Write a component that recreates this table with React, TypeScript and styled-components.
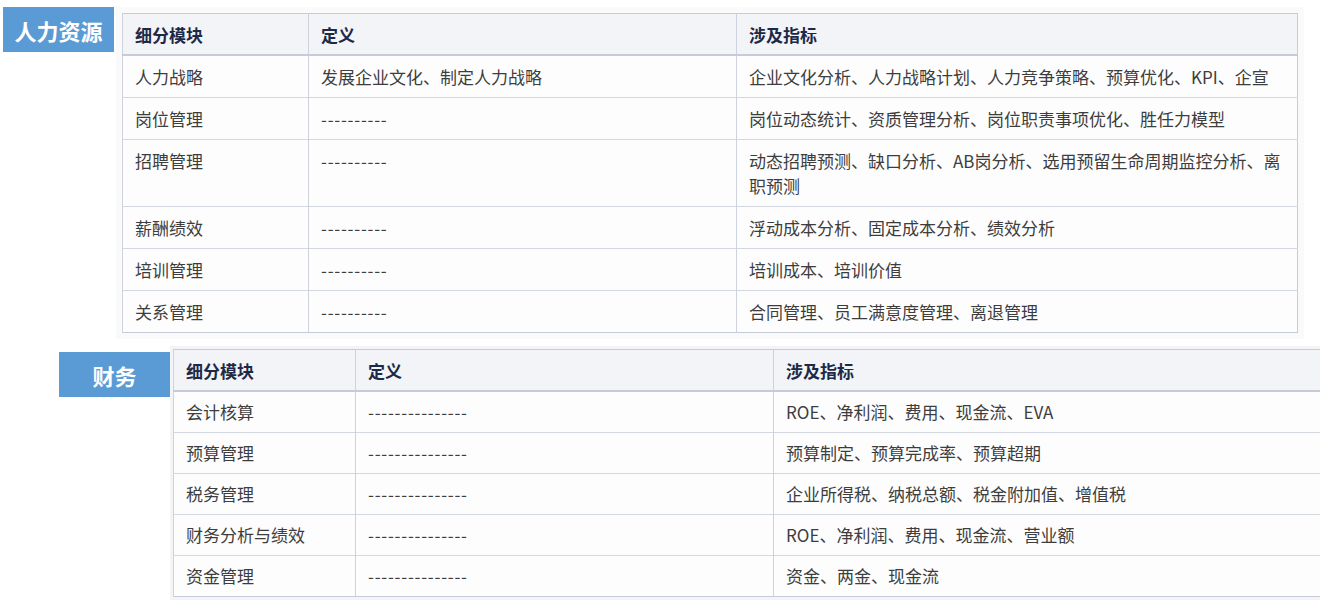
import React from "react";
import styled, { createGlobalStyle } from "styled-components";

const GlobalStyle = createGlobalStyle`
  html, body {
    margin: 0;
    padding: 0;
    background: #ffffff;
    overflow: hidden;
  }
  body {
    font-family: "Noto Sans CJK SC", "Noto Sans", sans-serif;
  }
`;

const Page = styled.div`
  width: 1320px;
  height: 606px;
  display: flex;
  flex-direction: column;
  gap: 7px;
  padding-top: 7px;
  box-sizing: border-box;
`;

const Section = styled.div<{ $indent: number; $labelTop: number }>`
  display: flex;
  align-items: flex-start;
  padding-left: ${(p) => p.$indent}px;
  gap: ${(p) => (p.$labelTop > 0 ? 0 : 2)}px;
  & > :first-child {
    margin-top: ${(p) => p.$labelTop}px;
  }
`;

const Label = styled.div`
  width: 111px;
  height: 45px;
  flex: none;
  background: #5b9bd5;
  color: #ffffff;
  font-weight: 700;
  font-size: 22px;
  display: flex;
  align-items: center;
  justify-content: center;
`;

const Card = styled.div<{ $pad: number; $bg: string }>`
  flex: none;
  padding: ${(p) => p.$pad}px;
  background: ${(p) => p.$bg};
`;

const Table = styled.table<{ $width: number }>`
  width: ${(p) => p.$width}px;
  border-collapse: collapse;
  table-layout: fixed;
  font-size: 17px;
  border: 1px solid #c6ccd7;
  background: #fdfdfe;
`;

const HeadCell = styled.th`
  text-align: left;
  font-weight: 700;
  color: #1c2947;
  background: #f3f4f7;
  padding: 8px 12px 7px;
  line-height: 25px;
  border-left: 1px solid #cdd2dc;
  border-bottom: 2px solid #c6ccd7;
`;

const Cell = styled.td<{ $line: number; $dash?: boolean }>`
  vertical-align: top;
  color: #3d3d3d;
  padding: 8px 12px;
  line-height: ${(p) => p.$line}px;
  letter-spacing: ${(p) => (p.$dash ? "0.75px" : "0")};
  border-left: 1px solid #cdd2dc;
  border-top: 1px solid #d3d7e0;
`;

type Row = [string, string, string];

const hrRows: Row[] = [
  ["人力战略", "发展企业文化、制定人力战略", "企业文化分析、人力战略计划、人力竞争策略、预算优化、KPI、企宣"],
  ["岗位管理", "----------", "岗位动态统计、资质管理分析、岗位职责事项优化、胜任力模型"],
  ["招聘管理", "----------", "动态招聘预测、缺口分析、AB岗分析、选用预留生命周期监控分析、离职预测"],
  ["薪酬绩效", "----------", "浮动成本分析、固定成本分析、绩效分析"],
  ["培训管理", "----------", "培训成本、培训价值"],
  ["关系管理", "----------", "合同管理、员工满意度管理、离退管理"],
];

const finRows: Row[] = [
  ["会计核算", "---------------", "ROE、净利润、费用、现金流、EVA"],
  ["预算管理", "---------------", "预算制定、预算完成率、预算超期"],
  ["税务管理", "---------------", "企业所得税、纳税总额、税金附加值、增值税"],
  ["财务分析与绩效", "---------------", "ROE、净利润、费用、现金流、营业额"],
  ["资金管理", "---------------", "资金、两金、现金流"],
];

const DataTable: React.FC<{ width: number; cols: [number, number, number]; rows: Row[]; line: number }> = ({
  width,
  cols,
  rows,
  line,
}) => (
  <Table $width={width}>
    <colgroup>
      {cols.map((c, i) => (
        <col key={i} style={{ width: c }} />
      ))}
    </colgroup>
    <thead>
      <tr>
        <HeadCell>细分模块</HeadCell>
        <HeadCell>定义</HeadCell>
        <HeadCell>涉及指标</HeadCell>
      </tr>
    </thead>
    <tbody>
      {rows.map((r) => (
        <tr key={r[0]}>
          <Cell $line={line}>{r[0]}</Cell>
          <Cell $line={line} $dash={/^-+$/.test(r[1])}>
            {r[1]}
          </Cell>
          <Cell $line={line}>{r[2]}</Cell>
        </tr>
      ))}
    </tbody>
  </Table>
);

export default function App() {
  return (
    <>
      <GlobalStyle />
      <Page>
        <Section $indent={3} $labelTop={0}>
          <Label>人力资源</Label>
          <Card $pad={6} $bg="#fafafb">
            <DataTable width={1175} cols={[186, 428, 561]} rows={hrRows} line={25} />
          </Card>
        </Section>
        <Section $indent={59} $labelTop={6}>
          <Label>财务</Label>
          <Card $pad={3} $bg="#f3f4f6">
            <DataTable width={1170} cols={[182, 418, 570]} rows={finRows} line={24} />
          </Card>
        </Section>
      </Page>
    </>
  );
}
